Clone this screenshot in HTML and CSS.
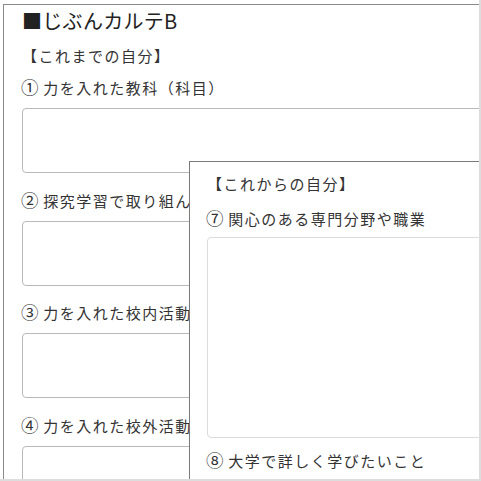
FILE: index.html
```html
<!DOCTYPE html>
<html lang="ja">
<head>
<meta charset="utf-8">
<title>じぶんカルテB</title>
<link rel="stylesheet" href="styles.css">
</head>
<body>
<div class="page">
  <div class="frame">
    <h1 class="title">■じぶんカルテB</h1>
    <div class="section">【これまでの自分】</div>
    <div class="field first">
      <label class="label"><span class="num">①</span> 力を入れた教科（科目）</label>
      <textarea class="box box-left"></textarea>
    </div>
    <div class="field">
      <label class="label"><span class="num">②</span> 探究学習で取り組んだこと</label>
      <textarea class="box box-left"></textarea>
    </div>
    <div class="field">
      <label class="label"><span class="num">③</span> 力を入れた校内活動</label>
      <textarea class="box box-left"></textarea>
    </div>
    <div class="field">
      <label class="label"><span class="num">④</span> 力を入れた校外活動</label>
      <textarea class="box box-left"></textarea>
    </div>
  </div>

  <div class="panel">
    <div class="section section-right">【これからの自分】</div>
    <label class="label label-q7"><span class="num">⑦</span> 関心のある専門分野や職業</label>
    <textarea class="box box-right box-tall"></textarea>
    <label class="label label-q8"><span class="num">⑧</span> 大学で詳しく学びたいこと</label>
  </div>
</div>
</body>
</html>
```

FILE: styles.css
```css
* {
  box-sizing: border-box;
}

html, body {
  margin: 0;
  padding: 0;
  background: #ffffff;
}

body {
  font-family: "Noto Sans CJK JP", "Noto Sans", sans-serif;
  color: #333333;
}

.page {
  position: relative;
  width: 481px;
  height: 481px;
  overflow: hidden;
  border-right: 2px solid #dddddd;
  border-bottom: 2px solid #dddddd;
  background: #ffffff;
}

.frame {
  margin-left: 3px;
  margin-top: 4px;
  width: 700px;
  height: 600px;
  border-left: 1px solid #8a8a8a;
  border-top: 1px solid #8a8a8a;
  padding: 2px 0 0 18px;
}

.title {
  margin: 0;
  font-size: 20px;
  line-height: 28px;
  font-weight: normal;
  color: #222222;
  letter-spacing: 0.3px;
}

.section {
  margin-top: 10px;
  font-size: 15px;
  line-height: 22px;
  letter-spacing: 1.5px;
  color: #333333;
}

.label {
  display: block;
  font-size: 15px;
  line-height: 22px;
  letter-spacing: 1.5px;
  color: #333333;
  white-space: nowrap;
}

.num {
  font-size: 17.5px;
  line-height: 1;
  letter-spacing: 0;
  margin-left: -1px;
}

.field {
  margin-top: 16.5px;
}

.field.first {
  margin-top: 10px;
}

.field .label {
  margin-bottom: 9px;
}

.box {
  display: block;
  margin: 0;
  padding: 0;
  resize: none;
  background: #ffffff;
  border-radius: 4px;
  font: inherit;
  outline: none;
}

.box-left {
  width: 640px;
  height: 65px;
  border: 1px solid #b9b9b9;
}

.panel {
  position: absolute;
  left: 189px;
  top: 161px;
  width: 420px;
  height: 400px;
  border: 1px solid #7a7a7a;
  background: #ffffff;
  padding: 11px 0 0 17px;
}

.section-right {
  margin-top: 0;
}

.label-q7 {
  margin-top: 13px;
}

.box-right {
  margin-top: 7px;
  width: 380px;
  border: 1px solid #dcdcdc;
}

.box-tall {
  height: 201px;
}

.label-q8 {
  margin-top: 12px;
}
```
